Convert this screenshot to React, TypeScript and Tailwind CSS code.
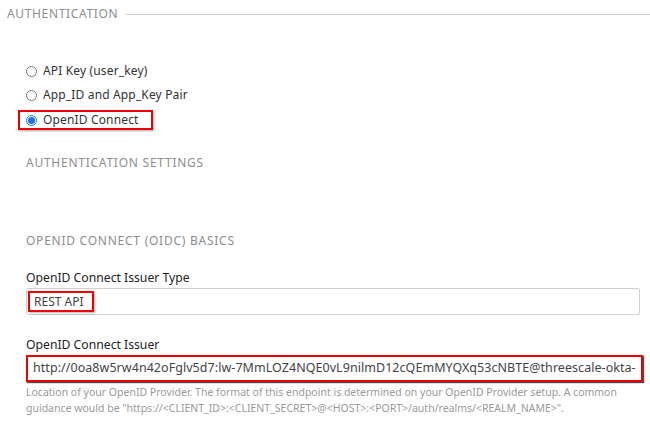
const font = { fontFamily: '"Noto Sans", "Open Sans", sans-serif' };

function Radio({ checked }: { checked?: boolean }) {
  if (checked) {
    return (
      <span className="flex h-[11px] w-[11px] items-center justify-center rounded-full border border-[#1a73e8] bg-white">
        <span className="h-[7px] w-[7px] rounded-full bg-[#1a73e8]" />
      </span>
    );
  }
  return <span className="h-[11px] w-[11px] rounded-full border border-[#767676] bg-white" />;
}

function SectionTitle({ children }: { children: string }) {
  return <h3 className="text-[12px] leading-4 tracking-[0.75px] text-[#8b8d8f]">{children}</h3>;
}

export default function App() {
  return (
    <div className="h-[433px] w-[650px] overflow-hidden bg-white text-[#333]" style={font}>
      <div className="flex h-7 items-center pl-[7px]">
        <span className="text-[12px] tracking-[0.65px] text-[#8b8d8f]">AUTHENTICATION</span>
        <span className="ml-[8px] h-px flex-1 bg-[#cfcfcf]" />
      </div>

      <div className="mt-[31px] flex flex-col pl-[18px]">
        <label className="flex h-6 items-center gap-[6px] pl-[8px] text-[12px] tracking-[0.15px]">
          <Radio />
          <span>API Key (user_key)</span>
        </label>
        <label className="flex h-6 items-center gap-[6px] pl-[8px] text-[12px] tracking-[0.15px]">
          <Radio />
          <span>App_ID and App_Key Pair</span>
        </label>
        <label className="mt-[3px] flex h-[20px] w-[135px] items-center gap-[6px] border-2 border-[#e00] pl-[6px] text-[12px] tracking-[0.15px] shadow-[1px_1px_2px_rgba(0,0,0,0.35)]">
          <Radio checked />
          <span>OpenID Connect</span>
        </label>
      </div>

      <div className="pl-[26px]">
        <div className="mt-[25px]">
          <SectionTitle>AUTHENTICATION SETTINGS</SectionTitle>
        </div>
        <div className="mt-[62px]">
          <SectionTitle>OPENID CONNECT (OIDC) BASICS</SectionTitle>
        </div>

        <div className="mt-[21px] w-[614px]">
          <div className="text-[12.2px] leading-4 text-[#222]">OpenID Connect Issuer Type</div>
          <div className="mt-[2px] flex h-[27px] items-center rounded-[2px] border border-[#d1d1d1] px-[1px]">
            <span className="flex h-[21px] w-[66px] items-center border-2 border-[#e00] pl-[4px] text-[12px] text-[#444] shadow-[1px_1px_2px_rgba(0,0,0,0.3)]">
              REST API
            </span>
          </div>
        </div>

        <div className="mt-[22px] w-[617px]">
          <div className="text-[12.2px] leading-4 text-[#222]">OpenID Connect Issuer</div>
          <div className="mt-[2px] flex h-[27px] items-center overflow-hidden whitespace-nowrap border-2 border-[#e00] pl-[5px] text-[12.5px] tracking-[0.05px] text-[#444] shadow-[1px_1px_1px_rgba(0,0,0,0.7)]">
            http://0oa8w5rw4n42oFglv5d7:lw-7MmLOZ4NQE0vL9nilmD12cQEmMYQXq53cNBTE@threescale-okta-
          </div>
          <p className="mt-[2px] text-[10.5px] leading-4 text-[#9a9a9a]">
            Location of your OpenID Provider. The format of this endpoint is determined on your OpenID Provider setup. A common guidance would be "https://&lt;CLIENT_ID&gt;:&lt;CLIENT_SECRET&gt;@&lt;HOST&gt;:&lt;PORT&gt;/auth/realms/&lt;REALM_NAME&gt;".
          </p>
        </div>
      </div>
    </div>
  );
}
